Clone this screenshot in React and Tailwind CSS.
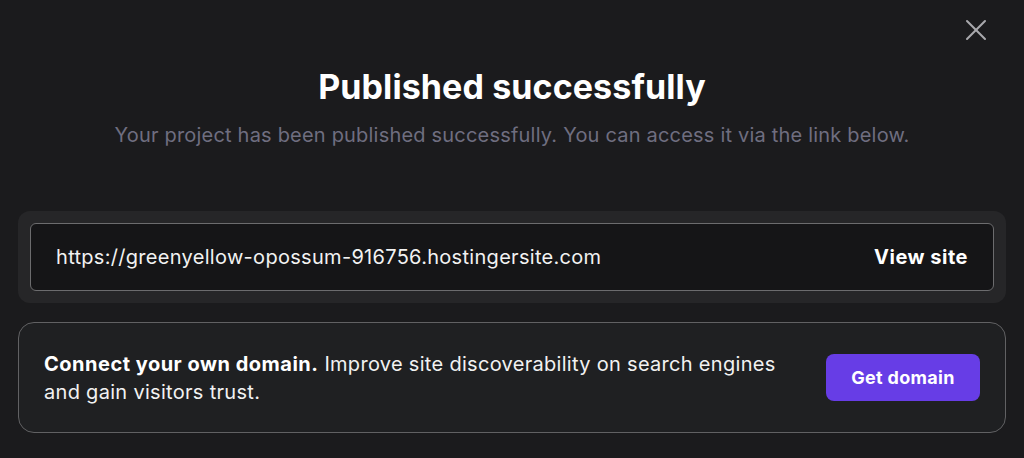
import { X } from 'lucide-react';

export default function App() {
  return (
    <div
      className="relative w-[1024px] h-[458px] overflow-hidden bg-[#1b1b1d] px-[18px] pt-[67px]"
      style={{ fontFamily: 'Inter, "Noto Sans", sans-serif' }}
    >
      <button className="absolute top-[12px] right-[30px] text-[#a9a9ad]" aria-label="Close">
        <X size={36} strokeWidth={1.35} />
      </button>

      <h1 className="text-center text-[34px] leading-[40px] font-bold tracking-[0.1px] text-white">
        Published successfully
      </h1>
      <p className="mt-[14px] text-center text-[20px] leading-[28px] tracking-[0.2px] text-[#6f6e80]">
        Your project has been published successfully. You can access it via the link below.
      </p>

      <div className="mt-[62px] rounded-[12px] bg-[#262628] p-[12px]">
        <div className="flex h-[68px] items-center justify-between rounded-[6px] border border-[#6c6c6e] bg-[#151517] pl-[25px] pr-[25px]">
          <span className="text-[20px] tracking-[0.3px] text-[#f2f2f2]">https://greenyellow-opossum-916756.hostingersite.com</span>
          <a href="#" className="text-[20px] font-bold tracking-[0.5px] text-white">View site</a>
        </div>
      </div>

      <div className="mt-[19px] flex h-[111px] items-center justify-between rounded-[16px] border border-[#616163] bg-[#1f2022] pl-[25px] pr-[25px]">
        <p className="w-[760px] text-[20px] leading-[28px] tracking-[0.3px] text-[#f2f2f2]">
          <span className="font-bold tracking-[0.5px] text-white">Connect your own domain.</span> Improve site discoverability on search engines and gain visitors trust.
        </p>
        <button className="h-[47px] w-[154px] rounded-[8px] bg-[#673de6] text-[18px] font-bold tracking-[0.3px] text-white">
          Get domain
        </button>
      </div>
    </div>
  );
}
